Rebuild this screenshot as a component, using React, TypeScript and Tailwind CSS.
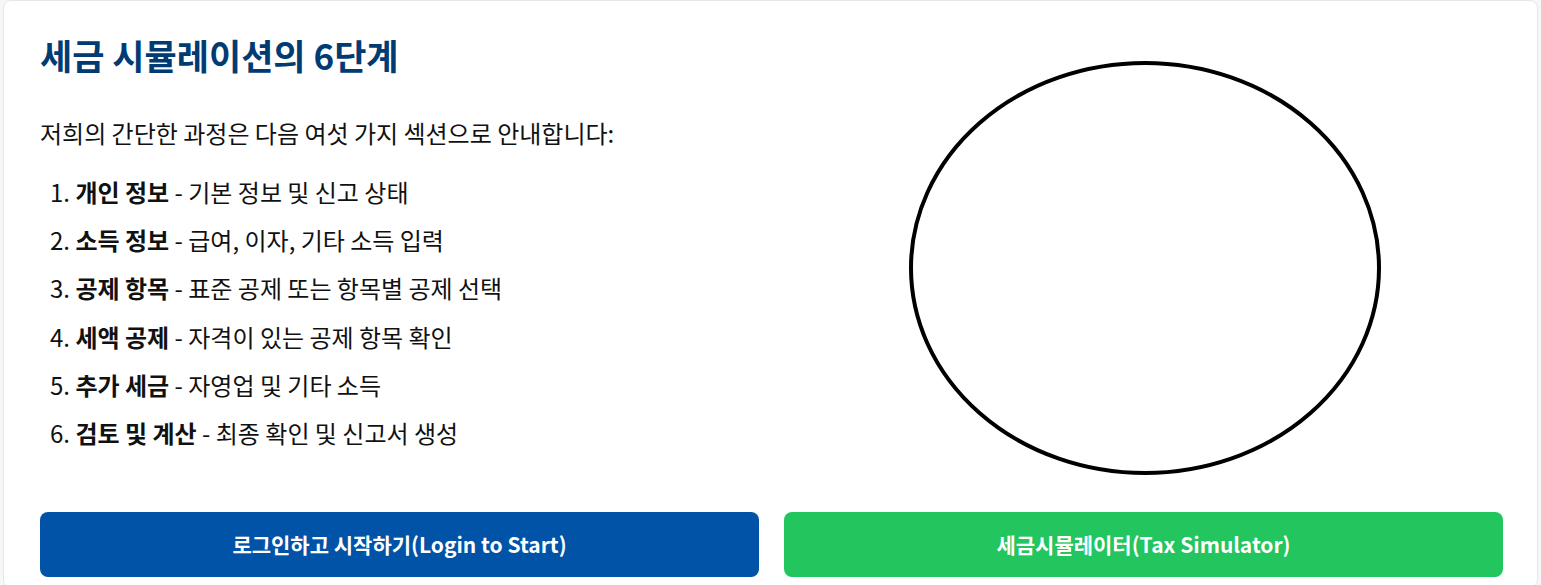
export default function App() {
  const steps = [
    { title: "개인 정보", desc: "기본 정보 및 신고 상태" },
    { title: "소득 정보", desc: "급여, 이자, 기타 소득 입력" },
    { title: "공제 항목", desc: "표준 공제 또는 항목별 공제 선택" },
    { title: "세액 공제", desc: "자격이 있는 공제 항목 확인" },
    { title: "추가 세금", desc: "자영업 및 기타 소득" },
    { title: "검토 및 계산", desc: "최종 확인 및 신고서 생성" },
  ];

  return (
    <main
      className="min-h-screen bg-[#f7f7f7] px-[3px] text-[#111]"
      style={{ fontFamily: '"Noto Sans CJK KR", "Noto Sans", sans-serif' }}
    >
      <div className="bg-white border border-gray-200 rounded-lg pl-9 pr-[34px] pt-[33px] pb-[10px]">
        <div className="grid grid-cols-2 gap-[25px]">
          <div>
            <h1 className="text-[35px] font-bold leading-[1.2] text-[#003b73]">
              세금 시뮬레이션의 6단계
            </h1>

            <p className="mt-[39px] text-[24px] leading-[1.5]">
              저희의 간단한 과정은 다음 여섯 가지 섹션으로 안내합니다:
            </p>

            <ol className="mt-[17px] pl-[10px]">
              {steps.map((s, i) => (
                <li key={i} className="text-[24px] leading-[48.2px]">
                  {i + 1}. <strong className="font-bold">{s.title}</strong> - {s.desc}
                </li>
              ))}
            </ol>
          </div>

          <div className="flex justify-center pl-[3px] pt-[27px]">
            <svg width="472" height="414" viewBox="0 0 472 414">
              <ellipse cx="236" cy="207" rx="234" ry="205" fill="none" stroke="#000" strokeWidth="4" />
            </svg>
          </div>
        </div>

        <div className="grid grid-cols-2 gap-[25px] mt-[37px]">
          <button className="h-[65px] rounded-lg bg-[#0053a6] text-white text-[21px] font-bold">
            로그인하고 시작하기(Login to Start)
          </button>
          <button className="h-[65px] rounded-lg bg-[#22c55e] text-white text-[21px] font-bold">
            세금시뮬레이터(Tax Simulator)
          </button>
        </div>
      </div>
    </main>
  );
}
